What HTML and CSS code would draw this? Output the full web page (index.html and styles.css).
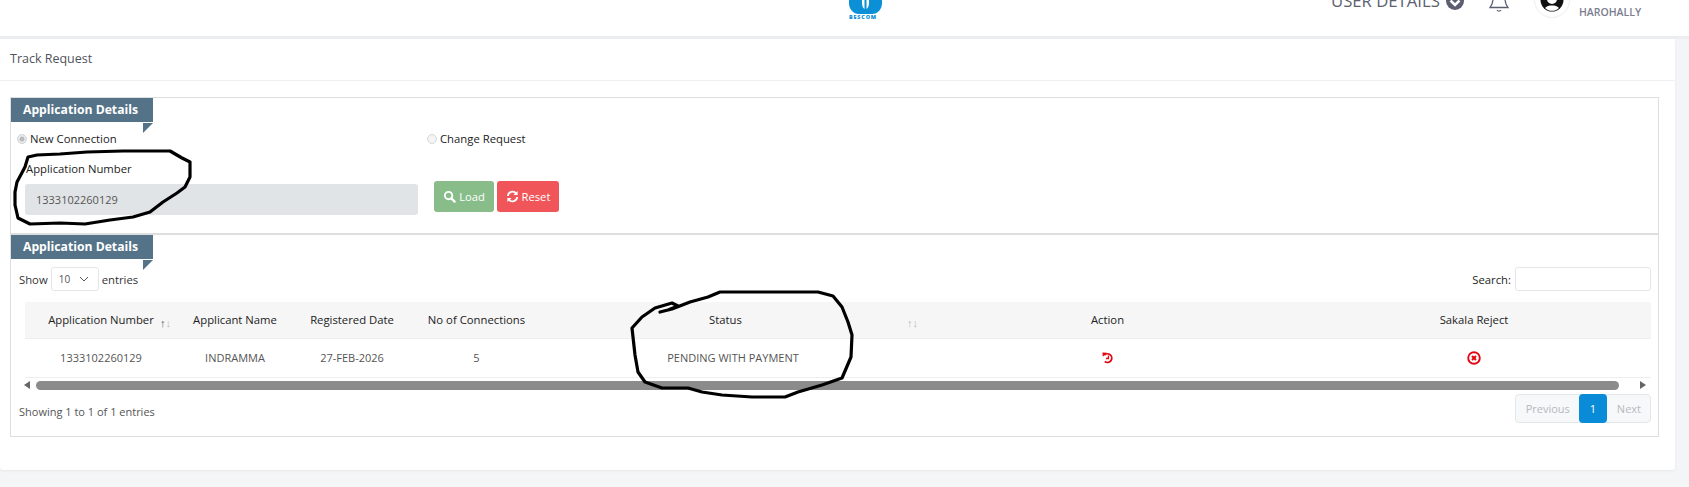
FILE: index.html
```html
<!doctype html>
<html lang="en">
  <head>
    <meta charset="UTF-8" />
    <meta name="viewport" content="width=device-width, initial-scale=1.0" />
    <title>Track Request</title>
    <link rel="stylesheet" href="styles.css">
  </head>
  <body>
    <header class="topbar">
      <div class="logo">
        <svg class="logo-mark" viewBox="0 0 33 14">
          <path d="M0 0h33v3c0 6-4 11-10 11H10C4 14 0 9 0 3z" fill="#0b8fd6"/>
          <path d="M13 0h2.500v9C14 8 13 6 13 3zM20 0h-2.500v9C19 8 20 6 20 3z" fill="#fff"/>
        </svg>
        <span class="logo-text">BESCOM</span>
      </div>
      <div class="user-details">
        <span>USER DETAILS</span>
        <svg class="chevron-circle" viewBox="0 0 18 18">
          <circle cx="9" cy="9" r="9" fill="#5c5f70"/>
          <path d="M4.500 8.500L9 13l4.500-4.500" fill="none" stroke="#fff" stroke-width="2.600"/>
        </svg>
      </div>
      <svg class="bell" viewBox="0 0 20 12">
        <path d="M4 0L3 4 1 7.500h18L17 4l-1-4" fill="none" stroke="#5c5f70" stroke-width="1.300"/>
        <path d="M8 10c1 1.500 3 1.500 4 0" fill="none" stroke="#5c5f70" stroke-width="1.300"/>
      </svg>
      <div class="avatar">
        <svg viewBox="0 0 24 24">
          <circle cx="12" cy="12" r="11.500" fill="#111"/>
          <circle cx="12" cy="11" r="5" fill="#fff"/>
          <path d="M5 20c2-2 4-2.500 7-2.500s5 .5 7 2.500c-2 2-4.500 2.800-7 2.800s-5-.8-7-2.800z" fill="#fff"/>
        </svg>
      </div>
      <div class="user-place">HAROHALLY</div>
    </header>

    <main class="card">
      <div class="card-title">Track Request</div>
      <div class="card-body">
        <section class="box">
          <div class="form-part">
            <div class="tab">Application Details</div>
            <div class="radios">
              <label class="radio radio-first"><input type="radio" name="kind" checked disabled> New Connection</label>
              <label class="radio"><input type="radio" name="kind" disabled> Change Request</label>
            </div>
            <div class="form-row">
              <div class="field">
                <div class="field-label">Application Number</div>
                <div class="field-input">1333102260129</div>
              </div>
              <div class="actions">
                <button class="btn btn-load">
                  <svg viewBox="0 0 14 14"><circle cx="6" cy="6" r="4" fill="none" stroke="#fff" stroke-width="2"/><path d="M9 9l3.500 3.500" stroke="#fff" stroke-width="2.400" stroke-linecap="round"/></svg>
                  Load
                </button>
                <button class="btn btn-reset">
                  <svg viewBox="0 0 14 14"><path d="M2 6.500A5 5 0 0 1 11 3.800" fill="none" stroke="#fff" stroke-width="2"/><path d="M12.500 1v4.500H8z" fill="#fff"/><path d="M12 7.500A5 5 0 0 1 3 10.200" fill="none" stroke="#fff" stroke-width="2"/><path d="M1.500 13V8.500H6z" fill="#fff"/></svg>
                  Reset
                </button>
              </div>
            </div>
          </div>

          <div class="list-part">
            <div class="tab">Application Details</div>
            <div class="list-top">
              <div class="show">
                Show
                <span class="select">10
                  <svg viewBox="0 0 10 6"><path d="M1 1l4 4 4-4" fill="none" stroke="#555" stroke-width="1"/></svg>
                </span>
                entries
              </div>
              <div class="search">Search: <span class="search-input"></span></div>
            </div>

            <div class="table-wrap">
              <table class="grid">
                <colgroup>
                  <col class="c1"><col class="c2"><col class="c3"><col class="c4"><col class="c5"><col class="c6"><col class="c7">
                </colgroup>
                <thead>
                  <tr>
                    <th>Application Number <span class="sort"><b>↑</b>↓</span></th>
                    <th>Applicant Name</th>
                    <th>Registered Date</th>
                    <th>No of Connections</th>
                    <th class="th-status">Status <span class="sort">↑↓</span></th>
                    <th class="col-action">Action</th>
                    <th>Sakala Reject</th>
                  </tr>
                </thead>
                <tbody>
                  <tr>
                    <td>1333102260129</td>
                    <td>INDRAMMA</td>
                    <td>27-FEB-2026</td>
                    <td>5</td>
                    <td>PENDING WITH PAYMENT</td>
                    <td class="col-action">
                      <svg class="icon-history" viewBox="0 0 12 12">
                        <path d="M2.300 3.200A4.300 4.300 0 1 1 2.800 9.500" fill="none" stroke="#e30613" stroke-width="1.800"/>
                        <path d="M.4 .6l4.600 .2-4.200 4z" fill="#e30613"/>
                        <path d="M6.400 3.500v3H4" fill="none" stroke="#e30613" stroke-width="1.300"/>
                      </svg>
                    </td>
                    <td>
                      <svg class="icon-reject" viewBox="0 0 14 14">
                        <circle cx="7" cy="7" r="5.800" fill="none" stroke="#e30613" stroke-width="1.900"/>
                        <path d="M5 5l4 4M9 5l-4 4" stroke="#e30613" stroke-width="2"/>
                      </svg>
                    </td>
                  </tr>
                </tbody>
              </table>
              <div class="scrollbar">
                <span class="arrow-left"></span>
                <span class="thumb"></span>
                <span class="arrow-right"></span>
              </div>
            </div>

            <div class="list-foot">
              <div class="info">Showing 1 to 1 of 1 entries</div>
              <div class="pager">
                <span class="page">Previous</span>
                <span class="page page-on">1</span>
                <span class="page">Next</span>
              </div>
            </div>
          </div>
        </section>
      </div>
    </main>

    <!-- pen marks drawn over the screenshot -->
    <svg class="scribble" viewBox="0 0 1689 487">
      <path d="M25 167L28 157 37 155 60 154 87 152 123 151 170 151 182 158 190 162 190 177 185 187 177 193 163 202 150 212 133 217 110 220 85 224 60 223 30 224 18 218 15 205 15 192 17 182 25 167"/>
      <path d="M660 312L672 309 690 302 708 297 720 292 758 292 818 292 833 296 842 307 848 322 852 335 851 357 842 378 822 385 798 392 785 397 752 397 722 395 702 392 688 388 662 388 645 382 638 372 635 355 632 328 642 317 655 308 672 303 678 306 668 310 660 312"/>
    </svg>
  </body>
</html>
```

FILE: styles.css
```css
* {
  margin: 0;
  padding: 0;
  box-sizing: border-box;
}

body {
  position: relative;
  height: 487px;
  overflow: hidden;
  background: #f4f5f7;
  font-family: "Open Sans", sans-serif;
  font-size: 11.3px;
  color: #333;
}

.topbar {
  height: 39px;
  background: #fff;
  border-bottom: 3px solid #ebedf0;
  position: relative;
  display: flex;
  align-items: flex-start;
  overflow: hidden;
}

.logo {
  margin-left: 849px;
  width: 33px;
  display: flex;
  flex-direction: column;
}

.logo-mark {
  width: 33px;
  height: 14px;
  display: block;
}

.logo-text {
  font-size: 5.500px;
  line-height: 6px;
  font-weight: 800;
  letter-spacing: 0.8px;
  color: #0b8fd6;
}

.user-details {
  margin-left: 449px;
  margin-top: -10px;
  display: flex;
  align-items: center;
  gap: 6px;
  font-size: 16.700px;
  line-height: 22px;
  color: #5c5f70;
}

.chevron-circle {
  width: 18px;
  height: 18px;
}

.bell {
  width: 20px;
  height: 12px;
  margin-left: 25px;
}

.avatar {
  width: 36px;
  height: 36px;
  margin-left: 25px;
  margin-top: -18px;
  border-radius: 50%;
  border: 1px solid #eee;
  padding: 5px;
  flex: none;
}

.avatar svg {
  display: block;
}

.user-place {
  margin-left: 9px;
  margin-top: 5px;
  font-size: 10.500px;
  line-height: 14px;
  font-weight: 600;
  color: #7b7d8f;
}

.card {
  height: 431px;
  margin-right: 14px;
  background: #fff;
  border-radius: 0 0 3px 3px;
  box-shadow: 0 1px 3px rgba(0, 0, 0, 0.06);
}

.card-title {
  height: 42px;
  padding-left: 10px;
  border-bottom: 1px solid #eff0f2;
  font-size: 12.500px;
  line-height: 40px;
  color: #50535c;
}

.card-body {
  padding: 16px 16px 0 10px;
}

.box {
  height: 340px;
  border: 1px solid #dcdee0;
}

.form-part {
  height: 137px;
  border-bottom: 2px solid #dcdee0;
}

.tab {
  position: relative;
  width: 142px;
  height: 24px;
  padding-left: 12px;
  background: #557388;
  color: #fff;
  font-size: 12.200px;
  font-weight: 700;
  line-height: 24px;
}

.tab::after {
  content: '';
  position: absolute;
  left: 132px;
  top: 25px;
  width: 10px;
  height: 10px;
  background: #557388;
  clip-path: polygon(0 0, 100% 0, 0 100%);
}

.radios {
  display: flex;
  padding: 10px 0 0 6px;
}

.radio {
  display: flex;
  align-items: center;
  gap: 3px;
  line-height: 14px;
  color: #222;
}

.radio-first {
  width: 410px;
}

.radio input {
  appearance: none;
  width: 10px;
  height: 10px;
  border-radius: 50%;
  border: 1px solid #d6d8da;
  background: #f4f4f4;
}

.radio input:checked {
  background: #b8babc;
  box-shadow: inset 0 0 0 1.500px #eee;
}

.form-row {
  display: flex;
  align-items: flex-end;
  padding-left: 14px;
  margin-top: 15px;
}

.field {
  width: 393px;
  margin-bottom: -3px;
}

.field-label {
  padding-left: 1px;
  line-height: 16px;
  color: #222;
  margin-bottom: 7px;
}

.field-input {
  height: 31px;
  padding-left: 11px;
  background: #e1e4e6;
  border-radius: 3px;
  font-size: 11px;
  line-height: 31px;
  color: #555;
}

.actions {
  display: flex;
  gap: 3px;
  margin-left: 16px;
}

.btn {
  display: flex;
  align-items: center;
  justify-content: center;
  gap: 3px;
  height: 31px;
  border: none;
  border-radius: 3px;
  color: #fff;
  font-family: inherit;
  font-size: 11.200px;
}

.btn svg {
  width: 13px;
  height: 13px;
}

.btn-load {
  width: 60px;
  background: #88bd8a;
}

.btn-reset {
  width: 62px;
  background: #f0555a;
}

.list-top {
  display: flex;
  justify-content: space-between;
  align-items: center;
  padding: 8px 7px 0 8px;
}

.show {
  display: flex;
  align-items: center;
  gap: 2px;
  color: #333;
}

.select {
  display: flex;
  align-items: center;
  justify-content: space-between;
  width: 48px;
  height: 24px;
  margin: 0 1px;
  padding: 0 9px 0 7px;
  border: 1px solid #e4e6e8;
  border-radius: 3px;
  font-size: 10px;
  color: #555;
}

.select svg {
  width: 10px;
  height: 6px;
}

.search {
  display: flex;
  align-items: center;
  gap: 4px;
  color: #222;
}

.search-input {
  width: 136px;
  height: 24px;
  border: 1px solid #e4e6e8;
  border-radius: 3px;
}

.table-wrap {
  margin: 11px 7px 0 14px;
}

.grid {
  width: 1626px;
  table-layout: fixed;
  border-collapse: collapse;
  text-align: center;
}

.c1 { width: 152px; }
.c2 { width: 116px; }
.c3 { width: 118px; }
.c4 { width: 131px; }
.c5 { width: 382px; }
.c6 { width: 373px; }
.c7 { width: 354px; }

.grid th {
  position: relative;
  height: 36px;
  background: #f6f6f6;
  border-bottom: 1px solid #eeeeee;
  font-weight: 400;
  color: #222;
}

.grid td {
  height: 39px;
  border-bottom: 1px solid #eeeeee;
  font-size: 11px;
  color: #555;
}

.grid .th-status {
  padding-right: 15px;
}

.grid .col-action {
  padding-right: 6px;
}

.sort {
  position: absolute;
  right: 6px;
  top: 14px;
  font-size: 11px;
  line-height: 14px;
  color: #bcbcbc;
}

.sort b {
  font-weight: 400;
  color: #555;
}

.icon-history {
  width: 12px;
  height: 12px;
  display: block;
  margin: 0 auto;
}

.icon-reject {
  width: 14px;
  height: 14px;
  display: block;
  margin: 0 auto;
}

.scrollbar {
  display: flex;
  align-items: center;
  height: 9px;
  margin-top: 3px;
  position: relative;
}

.arrow-left {
  width: 0;
  height: 0;
  margin-left: -1px;
  border-style: solid;
  border-width: 4px 6px 4px 0;
  border-color: transparent #666 transparent transparent;
}

.thumb {
  width: 1583px;
  height: 9px;
  margin-left: 6px;
  border-radius: 5px;
  background: #8b8b8b;
}

.arrow-right {
  width: 0;
  height: 0;
  margin-left: 21px;
  border-style: solid;
  border-width: 4px 0 4px 6px;
  border-color: transparent transparent transparent #666;
}

.list-foot {
  display: flex;
  justify-content: space-between;
  align-items: center;
  margin-top: 4px;
  padding: 0 7px 0 8px;
}

.info {
  margin-top: 6px;
  font-size: 11px;
  color: #555;
}

.pager {
  display: flex;
  height: 29px;
  border: 1px solid #e4e7ea;
  border-radius: 4px;
  background: #f6f8fa;
  font-size: 11px;
}

.page {
  padding: 0 9px 0 10px;
  line-height: 27px;
  color: #b6b9bd;
}

.page-on {
  width: 28px;
  margin: -1px 0;
  padding: 0;
  line-height: 29px;
  text-align: center;
  background: #0a8bd8;
  border-radius: 4px;
  color: #fff;
}

.scribble {
  position: absolute;
  left: 0;
  top: 0;
  width: 1689px;
  height: 487px;
  pointer-events: none;
}

.scribble path {
  fill: none;
  stroke: #000;
  stroke-width: 3.200;
  stroke-linejoin: round;
  stroke-linecap: round;
}
```
